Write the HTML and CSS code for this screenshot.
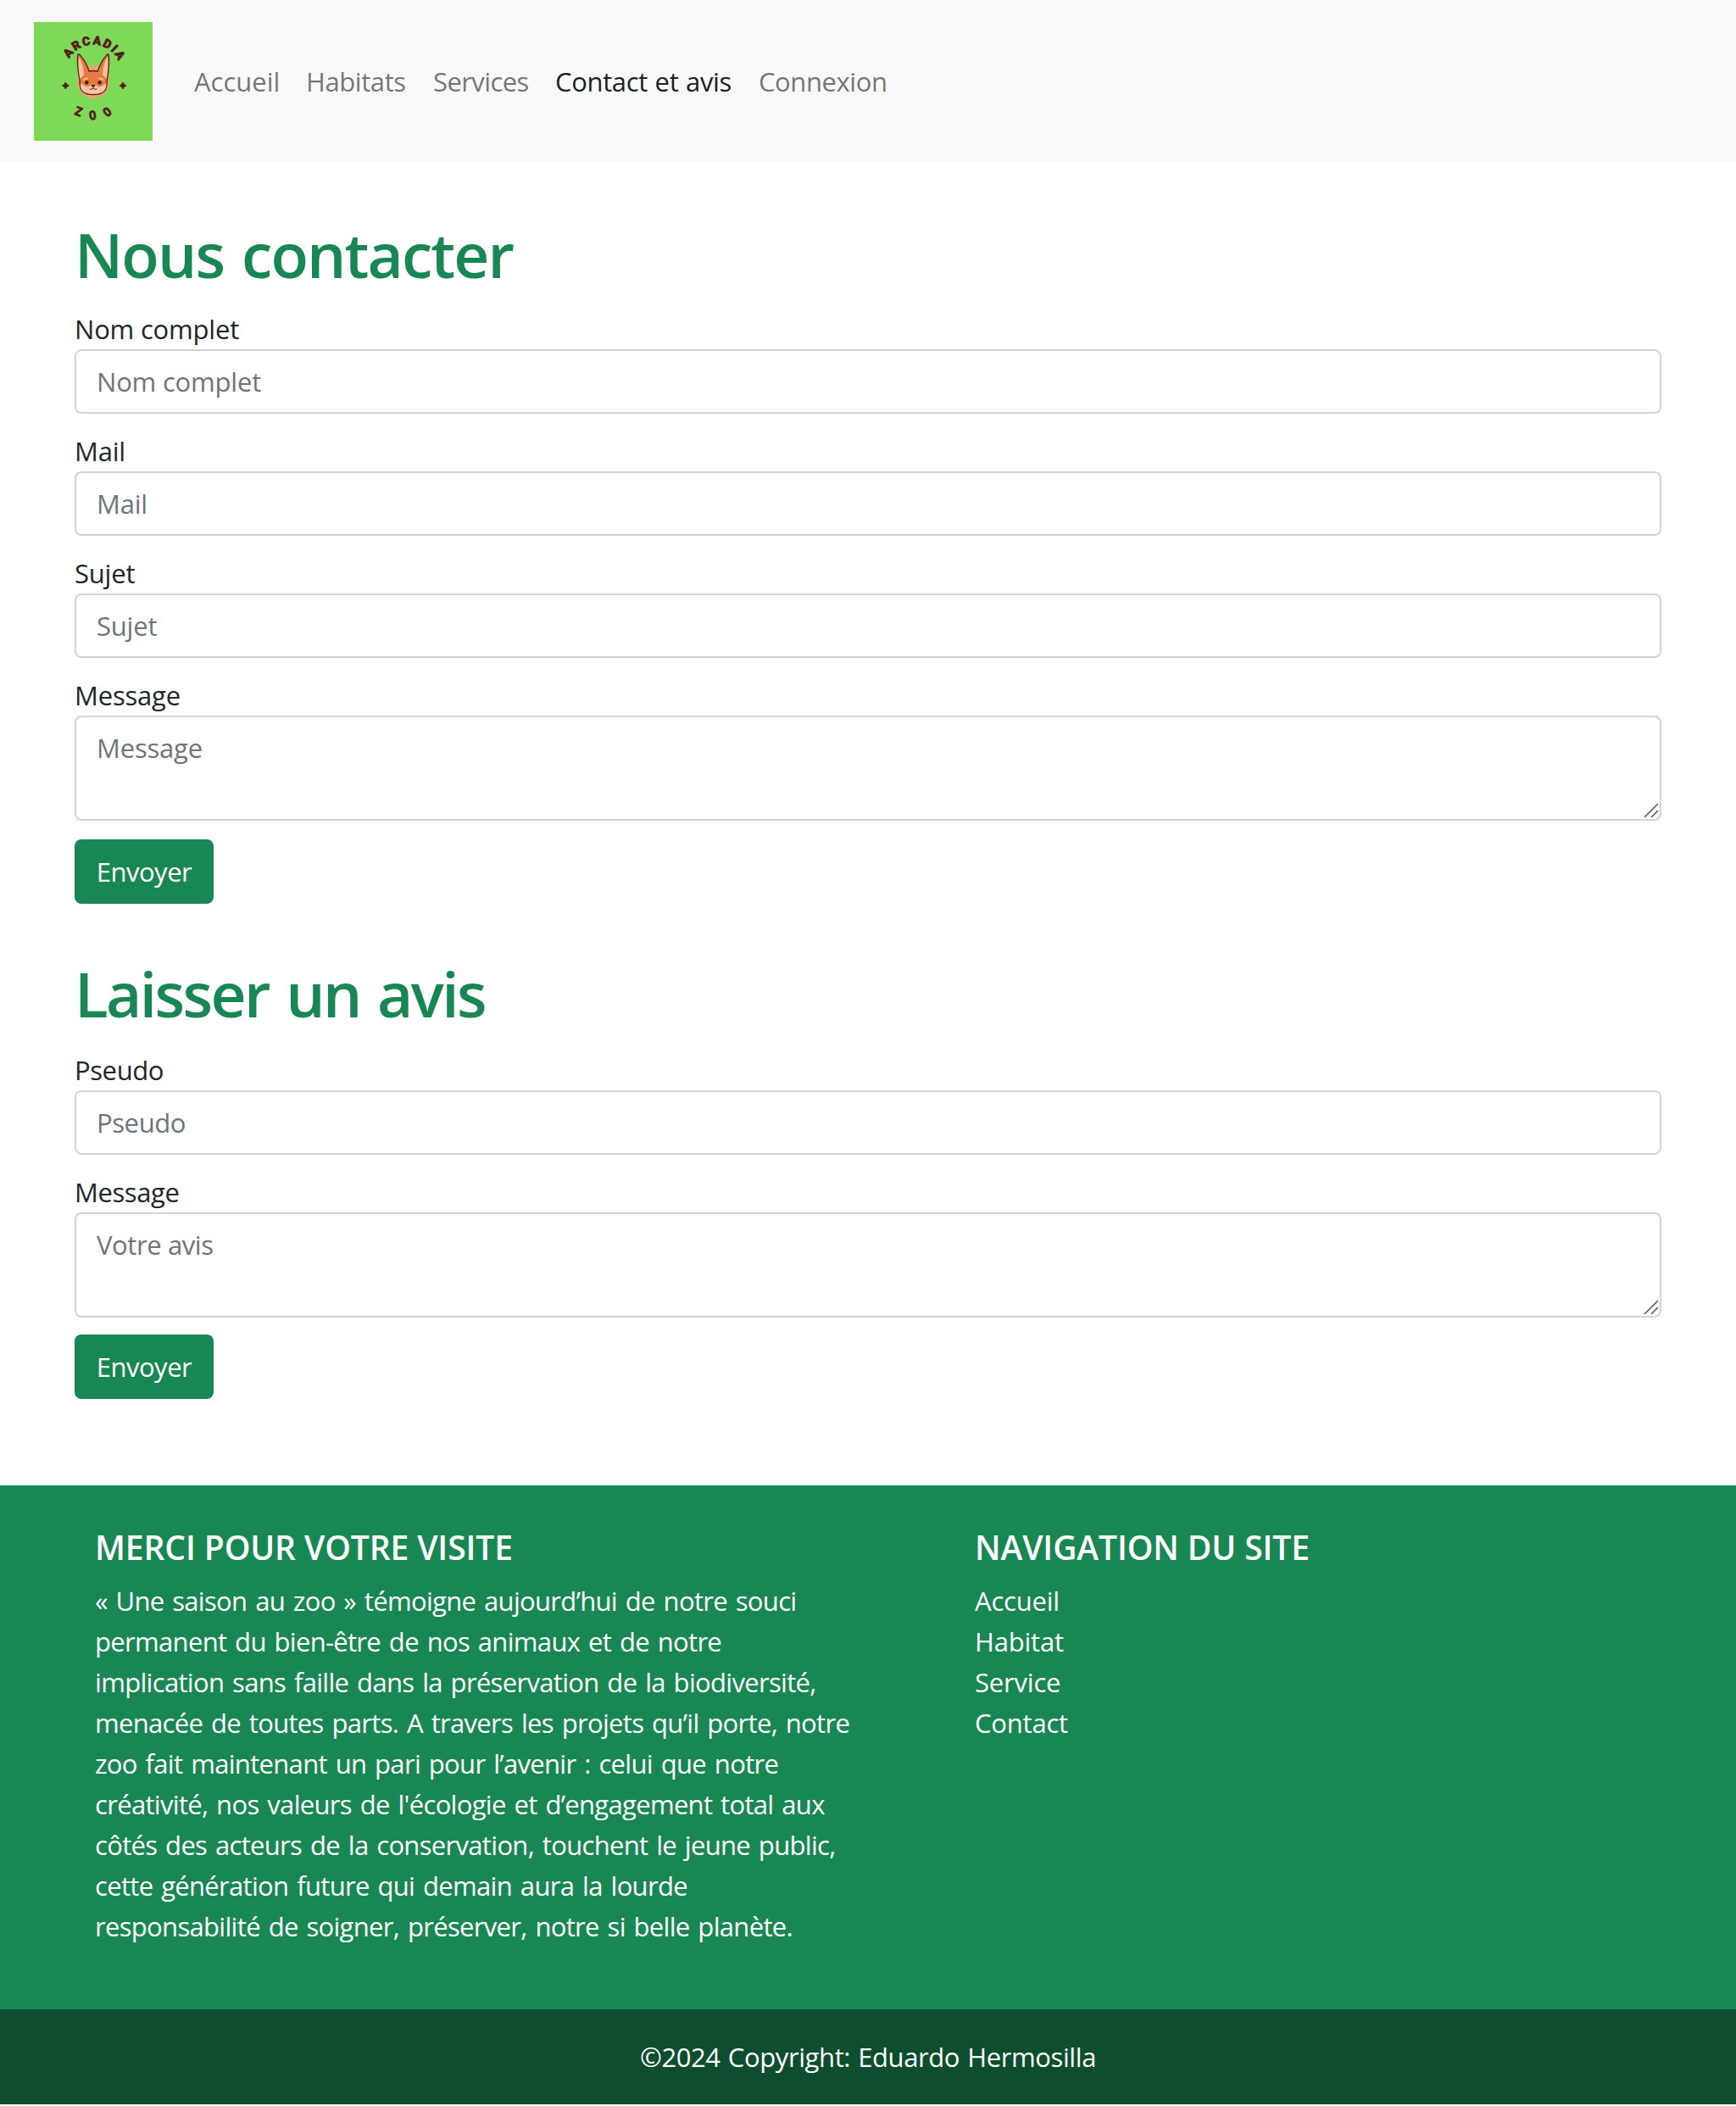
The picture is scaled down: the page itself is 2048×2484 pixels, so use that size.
FILE: index.html
```html
<!DOCTYPE html>
<html lang="fr">
<head>
  <meta charset="utf-8">
  <title>Arcadia Zoo - Contact et avis</title>
  <link rel="stylesheet" href="styles.css">
</head>
<body>
  <nav class="navbar">
    <a class="brand" href="#">
      <svg class="logo" viewBox="0 0 420 420" role="img" aria-label="Arcadia Zoo">
        <defs>
          <path id="arc-top" d="M113 237v-60a97 97 0 0 1 194 0v60"/>
          <path id="arc-bottom" d="M88 222a122 122 0 0 0 244 0"/>
        </defs>
        <rect width="420" height="420" fill="#7ed957"/>
        <text class="logo-text logo-top"><textPath href="#arc-top" startOffset="51.5%" text-anchor="middle">ARCADIA</textPath></text>
        <text class="logo-text logo-bottom"><textPath href="#arc-bottom" startOffset="54.5%" text-anchor="middle">ZOO</textPath></text>
        <path fill="#541f1b" d="M112 213q3 9 12 12q-9 3-12 12q-3-9-12-12q9-3 12-12zM315 213q3 9 12 12q-9 3-12 12q-3-9-12-12q9-3 12-12z" stroke="#541f1b" stroke-width="3"/>
        <circle cx="210" cy="212" r="57" fill="#f4a070"/>
        <path d="M204 262h12l-6 12z" fill="#f4a070"/>
        <g stroke="#541f1b" stroke-width="4" stroke-linejoin="round" stroke-linecap="round">
          <path d="M162 205Q152 150 155 117Q158 110 165 119Q187 146 195 174Q210 171 226 174Q234 146 256 119Q262 110 265 117Q268 150 259 205Q259 230 252 242Q240 257 210 257Q181 257 169 242Q162 230 162 205z" fill="#e57c40"/>
          <path d="M163 201Q155 160 159 122Q176 150 177 187z" fill="#f9c0a0" stroke="none"/>
          <path d="M257 201Q265 160 261 122Q244 150 243 187z" fill="#f9c0a0" stroke="none"/>
          <path d="M165 217Q177 227 190 230Q200 222 210 222Q220 222 230 230Q243 227 256 217Q257 234 249 242Q239 254 210 254Q181 254 171 242Q164 234 165 217z" fill="#f9c5a8" stroke="none"/>
          <path d="M177 205q6-7 13-5M231 200q8-2 13 5" fill="none" stroke="#f9c5a8" stroke-width="5"/>
          <path d="M210 228v6m-12 3q8 4 12-3q4 7 12 3" fill="none" stroke-width="3"/>
          <path d="M205 224h10l-5 5z" fill="#541f1b"/>
        </g>
        <circle cx="187" cy="214" r="7" fill="#541f1b"/>
        <circle cx="233" cy="214" r="7" fill="#541f1b"/>
      </svg>
    </a>
    <div class="nav-links">
      <a class="nav-link" href="#">Accueil</a>
      <a class="nav-link snug" href="#">Habitats</a>
      <a class="nav-link tight" href="#">Services</a>
      <a class="nav-link active" href="#">Contact et avis</a>
      <a class="nav-link snug" href="#">Connexion</a>
    </div>
  </nav>

  <main class="content">
    <form class="form">
      <h1 class="title">Nous contacter</h1>
      <label class="field">Nom complet<input class="control" type="text" placeholder="Nom complet"></label>
      <label class="field">Mail<input class="control" type="email" placeholder="Mail"></label>
      <label class="field">Sujet<input class="control" type="text" placeholder="Sujet"></label>
      <label class="field area">Message<textarea class="control" placeholder="Message"></textarea>
        <svg class="grip" viewBox="0 0 18 18"><path d="M1 17 17 1M9 17 17 9"/></svg>
      </label>
      <button class="btn" type="button">Envoyer</button>
    </form>

    <form class="form review">
      <h1 class="title">Laisser un avis</h1>
      <label class="field">Pseudo<input class="control" type="text" placeholder="Pseudo"></label>
      <label class="field area">Message<textarea class="control" placeholder="Votre avis"></textarea>
        <svg class="grip" viewBox="0 0 18 18"><path d="M1 17 17 1M9 17 17 9"/></svg>
      </label>
      <button class="btn" type="button">Envoyer</button>
    </form>
  </main>

  <footer class="footer">
    <div class="footer-grid">
      <section>
        <h2 class="footer-title">MERCI POUR VOTRE VISITE</h2>
        <p class="footer-text">« Une saison au zoo » témoigne aujourd’hui de notre souci permanent du bien-être de nos animaux et de notre implication sans faille dans la préservation de la biodiversité, menacée de toutes parts. A travers les projets qu’il porte, notre zoo fait maintenant un pari pour l’avenir : celui que notre créativité, nos valeurs de l'écologie et d’engagement total aux côtés des acteurs de la conservation, touchent le jeune public, cette génération future qui demain aura la lourde responsabilité de soigner, préserver, notre si belle planète.</p>
      </section>
      <section>
        <h2 class="footer-title">NAVIGATION DU SITE</h2>
        <ul class="footer-links">
          <li><a href="#">Accueil</a></li>
          <li><a href="#">Habitat</a></li>
          <li><a href="#">Service</a></li>
          <li><a href="#">Contact</a></li>
        </ul>
      </section>
    </div>
    <div class="copyright">©2024 Copyright: Eduardo Hermosilla</div>
  </footer>
</body>
</html>
```
FILE: styles.css
```css
* {
  box-sizing: border-box;
}

body {
  margin: 0;
  background: #fff;
  color: #212529;
  font: 31px/48px "Open Sans", "Noto Sans", sans-serif;
}

h1, h2, p, ul {
  margin: 0;
}

a {
  color: inherit;
  text-decoration: none;
}

/* Navigation */
.navbar {
  display: flex;
  align-items: center;
  height: 192px;
  padding: 0 40px;
  background: #f8f9fb;
}

.brand {
  display: block;
  width: 140px;
  height: 140px;
  margin-right: 49px;
}

.logo {
  display: block;
  width: 140px;
  height: 140px;
}

.logo-text {
  fill: #541f1b;
  stroke: #541f1b;
  stroke-width: 2px;
}

.logo-top {
  font: 900 43px Roboto, sans-serif;
  letter-spacing: 5px;
}

.logo-bottom {
  font: bold 43px "DejaVu Sans Mono", monospace;
  letter-spacing: 34px;
}

.nav-links {
  display: grid;
  grid-template-columns: 132px 150px 144px 240px auto;
}

.nav-link {
  color: rgba(0, 0, 0, 0.55);
  white-space: nowrap;
}

.nav-link.snug {
  letter-spacing: -0.42px;
}

.nav-link.tight {
  letter-spacing: -0.6px;
}

.nav-link.active {
  color: rgba(0, 0, 0, 0.9);
  letter-spacing: -0.35px;
  word-spacing: 1px;
}

/* Forms */
.content {
  padding: 64px 88px 102px;
}

.form {
  display: flex;
  flex-direction: column;
  align-items: stretch;
}

.review {
  margin-top: 62px;
}

.title {
  margin: 0 0 20px;
  color: #198754;
  font-size: 73px;
  font-weight: 600;
  line-height: 88px;
  letter-spacing: -1.9px;
  word-spacing: 4px;
}

.review .title {
  margin-bottom: 22px;
  letter-spacing: -2.6px;
}

.field {
  display: block;
  margin-bottom: 20px;
  letter-spacing: -0.2px;
}

.review .field {
  letter-spacing: -0.4px;
}

.area {
  position: relative;
  margin-bottom: 22px;
}

.review .area {
  margin-bottom: 20px;
}

.control {
  display: block;
  width: 100%;
  height: 76px;
  padding: 12px 24px;
  border: 2px solid #ced4da;
  border-radius: 8px;
  background: #fff;
  color: #212529;
  font: inherit;
  letter-spacing: inherit;
}

textarea.control {
  height: 124px;
  resize: none;
  overflow: hidden;
}

.control::placeholder {
  color: #6c757d;
  opacity: 1;
}

.grip {
  position: absolute;
  right: 3px;
  bottom: 3px;
  width: 18px;
  height: 18px;
  fill: none;
  stroke: #555;
  stroke-width: 1.6px;
}

.btn {
  align-self: flex-start;
  width: 164px;
  height: 76px;
  padding: 0;
  border: 0;
  border-radius: 8px;
  background: #198754;
  color: #fff;
  font: inherit;
  letter-spacing: -0.5px;
}

/* Footer */
.footer {
  background: #198754;
  color: #fff;
}

.footer-grid {
  display: grid;
  grid-template-columns: 900px auto;
  column-gap: 138px;
  padding: 49px 112px 74px;
}

.footer-title {
  margin-bottom: 15px;
  font-size: 39px;
  font-weight: 600;
  line-height: 48px;
  letter-spacing: -0.1px;
}

.footer-text {
  letter-spacing: -0.68px;
  word-spacing: 2.4px;
}

.footer-links {
  padding: 0;
  list-style: none;
  letter-spacing: -0.2px;
}

.copyright {
  padding: 32px;
  background: #0c4e2e;
  text-align: center;
  letter-spacing: -0.4px;
  word-spacing: 1.5px;
}
```
